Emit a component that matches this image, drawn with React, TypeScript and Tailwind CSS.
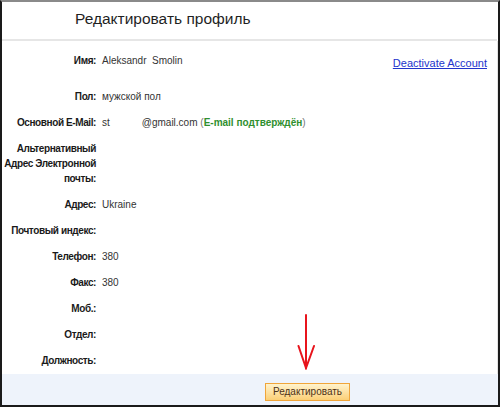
import React from "react";

type Field = {
  label: string[];
  value?: React.ReactNode;
};

const fields: Field[] = [
  { label: ["Пол:"], value: "мужской пол" },
  {
    label: ["Основной E-Mail:"],
    value: (
      <>
        st<span className="inline-block w-[32px]"></span>@gmail.com{" "}
        <span className="text-[#777]">(</span>
        <span className="font-bold text-[#2f8f2f]">E-mail подтверждён</span>
        <span className="text-[#777]">)</span>
      </>
    ),
  },
  { label: ["Альтернативный", "Адрес Электронной", "почты:"] },
  { label: ["Адрес:"], value: "Ukraine" },
  { label: ["Почтовый индекс:"] },
  { label: ["Телефон:"], value: "380" },
  { label: ["Факс:"], value: "380" },
  { label: ["Моб.:"] },
  { label: ["Отдел:"] },
  { label: ["Должность:"] },
];

const Row = ({ field }: { field: Field }) => (
  <div className="flex">
    <div className="w-[94px] shrink-0 whitespace-nowrap text-right font-bold tracking-[-0.4px] text-[#1a1a1a]">
      {field.label.map((line) => (
        <div key={line}>{line}</div>
      ))}
    </div>
    <div className="ml-[6px] text-[#333]">{field.value}</div>
  </div>
);

export default function App() {
  return (
    <div
      className="relative flex h-[407px] w-[500px] flex-col overflow-hidden border-t-2 border-r-2 border-b-2 border-l-2 border-t-[#8a8a8a] border-r-[#1a1a1a] border-b-[#1a1a1a] border-l-[#1a1a1a] bg-white text-[10px] leading-[15px]"
      style={{ fontFamily: '"Liberation Sans", Arial, sans-serif' }}
    >
      <div className="flex h-[37px] shrink-0 items-center pb-[4px] pl-[73px] text-[15.5px] text-[#1f1f1f]">
        Редактировать профиль
      </div>
      <div className="mr-px h-[2px] shrink-0 bg-[#e6e6e6]"></div>

      <div className="flex min-h-0 flex-1 flex-col gap-[11px] border-r border-[#e4e4e4] pt-[12px] pr-[10px]">
        <div className="flex pb-[7px]">
          <div className="w-[94px] shrink-0 text-right font-bold tracking-[-0.4px] text-[#1a1a1a]">Имя:</div>
          <div className="ml-[6px] flex-1 text-[#333]">Aleksandr&nbsp; Smolin</div>
          <a href="#" className="mt-[3px] text-[11px] text-[#2233cc] underline">
            Deactivate Account
          </a>
        </div>
        {fields.map((f) => (
          <Row key={f.label.join(" ")} field={f} />
        ))}
      </div>

      <div className="flex h-[31px] shrink-0 bg-[#eef3fb] pt-[9px] pl-[263px]">
        <button className="h-[18px] w-[85px] border border-[#f0a53a] bg-gradient-to-b from-[#fff3cc] to-[#fbcf75] text-[10px] leading-none text-[#4d3218]">
          Редактировать
        </button>
      </div>

      <svg
        className="absolute left-[294px] top-[312px]"
        width="20"
        height="56"
        viewBox="0 0 20 56"
        fill="none"
        stroke="#e8141c"
        strokeWidth="2"
        strokeLinecap="round"
      >
        <path d="M10 1 L10 54" />
        <path d="M2.5 32 L10 54 L18 32" />
      </svg>
    </div>
  );
}
